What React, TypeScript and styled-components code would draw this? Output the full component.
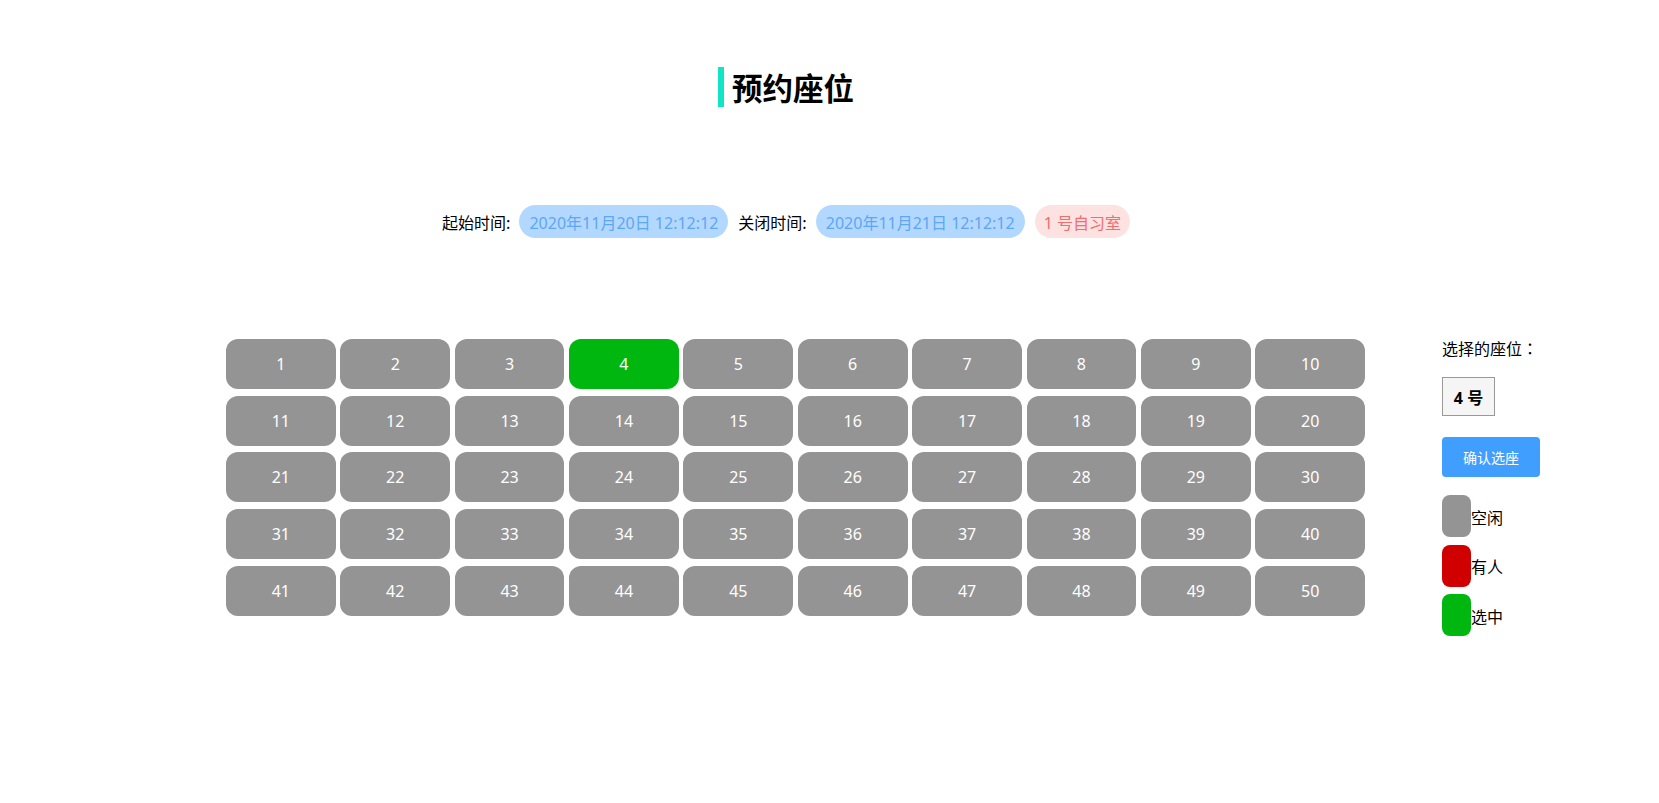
import React, { useState } from "react";
import styled, { createGlobalStyle } from "styled-components";

const GlobalStyle = createGlobalStyle`
  html, body {
    margin: 0;
    padding: 0;
    background: #ffffff;
  }
  body {
    font-family: "Noto Sans", "Noto Sans CJK SC", sans-serif;
    color: #000;
  }
  * { box-sizing: border-box; }
`;

const Page = styled.div`
  width: 1659px;
  min-height: 803px;
  padding-top: 67px;
`;

const Header = styled.div`
  width: 1572px;
  display: flex;
  justify-content: center;
`;

const Title = styled.h2`
  margin: 0;
  display: flex;
  align-items: center;
  height: 40px;
  font-size: 30.5px;
  font-weight: 700;
  line-height: 40px;
  font-family: "Noto Sans CJK SC", sans-serif;
  color: #000;
  &::before {
    content: "";
    display: block;
    width: 6px;
    height: 40px;
    background: #10e5c7;
    margin-right: 8px;
  }
`;

const InfoRow = styled.div`
  width: 1572px;
  margin-top: 98px;
  display: flex;
  justify-content: center;
  align-items: center;
`;

const Label = styled.span<{ $first?: boolean }>`
  margin-left: ${(p) => (p.$first ? "0" : "10px")};
  margin-right: 9px;
  font-size: 16px;
  font-family: "Noto Sans CJK SC", sans-serif;
`;

const Pill = styled.span<{ $tone: "blue" | "red" }>`
  display: inline-flex;
  align-items: center;
  height: 33px;
  padding: 0 ${(p) => (p.$tone === "red" ? "9px" : "10px")};
  border-radius: 17px;
  font-size: 16px;
  background: ${(p) => (p.$tone === "blue" ? "#b3d8ff" : "#fde2e2")};
  color: ${(p) => (p.$tone === "blue" ? "#5ea6f6" : "#f56c6c")};
  margin-left: ${(p) => (p.$tone === "red" ? "10px" : "0")};
`;

const Main = styled.div`
  display: flex;
  align-items: flex-start;
  margin-top: 101px;
  padding-left: 226px;
`;

const SeatGrid = styled.div`
  width: 1139px;
  display: grid;
  grid-template-columns: repeat(10, 1fr);
  column-gap: 4.7px;
  row-gap: 6.67px;
`;

const Seat = styled.button<{ $state: "free" | "taken" | "selected" }>`
  height: 50px;
  border: none;
  border-radius: 12px;
  padding: 0;
  font-family: "Noto Sans", sans-serif;
  font-size: 16px;
  color: #fff;
  cursor: pointer;
  background: ${(p) =>
    p.$state === "selected" ? "#00b70f" : p.$state === "taken" ? "#d00000" : "#949494"};
`;

const Side = styled.div`
  margin-left: 77px;
  display: flex;
  flex-direction: column;
  align-items: flex-start;
`;

const SideLabel = styled.div`
  font-size: 16px;
  line-height: 18px;
  font-family: "Noto Sans CJK SC", sans-serif;
`;

const WideColon = styled.span`
  font-family: "Noto Sans CJK TC", sans-serif;
`;

const Chosen = styled.div`
  margin-top: 20px;
  width: 53px;
  height: 39px;
  border: 1px solid #999;
  background: #f5f5f5;
  display: flex;
  align-items: center;
  justify-content: center;
  font-size: 16px;
  font-weight: 700;
  font-family: "Noto Sans", "Noto Sans CJK SC", sans-serif;
`;

const Confirm = styled.button`
  margin-top: 21px;
  width: 98px;
  height: 40px;
  border: none;
  border-radius: 4px;
  background: #409eff;
  color: #fff;
  font-size: 14px;
  font-family: "Noto Sans CJK SC", sans-serif;
  cursor: pointer;
`;

const Legend = styled.div`
  margin-top: 17px;
  display: flex;
  flex-direction: column;
  gap: 6.5px;
`;

const LegendItem = styled.div`
  display: flex;
  align-items: center;
  font-size: 16px;
  font-family: "Noto Sans CJK SC", sans-serif;
`;

const Swatch = styled.span<{ $color: string }>`
  display: block;
  width: 29px;
  height: 42px;
  border-radius: 8px;
  background: ${(p) => p.$color};
  margin-top: 1px;
`;

const LegendText = styled.span`
  margin-top: 2px;
`;

export default function App() {
  const [selected, setSelected] = useState<number>(4);
  const taken: number[] = [];
  const seats = Array.from({ length: 50 }, (_, i) => i + 1);

  return (
    <Page>
      <GlobalStyle />
      <Header>
        <Title>预约座位</Title>
      </Header>
      <InfoRow>
        <Label $first>起始时间:</Label>
        <Pill $tone="blue">2020年11月20日 12:12:12</Pill>
        <Label>关闭时间:</Label>
        <Pill $tone="blue">2020年11月21日 12:12:12</Pill>
        <Pill $tone="red">1 号自习室</Pill>
      </InfoRow>
      <Main>
        <SeatGrid>
          {seats.map((n) => (
            <Seat
              key={n}
              $state={n === selected ? "selected" : taken.includes(n) ? "taken" : "free"}
              onClick={() => setSelected(n)}
            >
              {n}
            </Seat>
          ))}
        </SeatGrid>
        <Side>
          <SideLabel>
            选择的座位<WideColon>：</WideColon>
          </SideLabel>
          <Chosen>{selected} 号</Chosen>
          <Confirm>确认选座</Confirm>
          <Legend>
            <LegendItem>
              <Swatch $color="#949494" />
              <LegendText>空闲</LegendText>
            </LegendItem>
            <LegendItem>
              <Swatch $color="#d00000" />
              <LegendText>有人</LegendText>
            </LegendItem>
            <LegendItem>
              <Swatch $color="#00b70f" />
              <LegendText>选中</LegendText>
            </LegendItem>
          </Legend>
        </Side>
      </Main>
    </Page>
  );
}
